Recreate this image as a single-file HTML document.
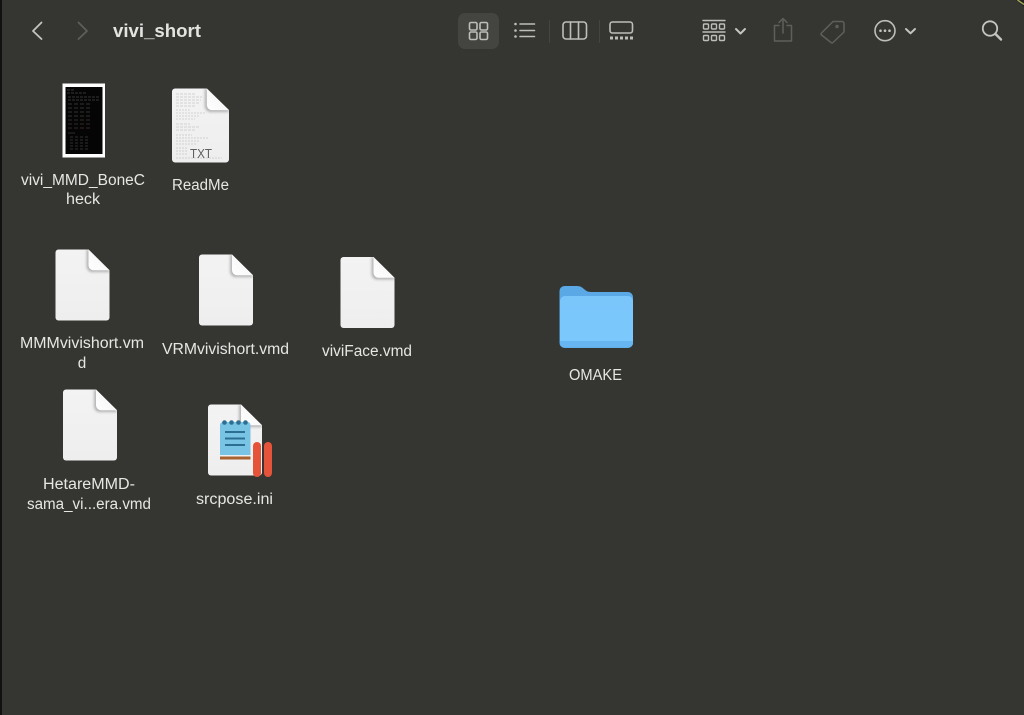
<!DOCTYPE html>
<html lang="en">
<head>
<meta charset="utf-8">
<title>vivi_short</title>
<style>
html,body{margin:0;padding:0;background:#353532;width:1024px;height:715px;overflow:hidden}
svg{display:block;filter:blur(.35px)}
text{font-family:"Liberation Sans",sans-serif}
.l{font-size:15.3px;fill:#e6e6e3;text-anchor:middle}
.t{fill:none;stroke:#bdbdb9;stroke-width:1.6;stroke-linecap:round;stroke-linejoin:round}
.d{fill:none;stroke:#5e5e5a;stroke-width:1.5;stroke-linecap:round;stroke-linejoin:round}
</style>
</head>
<body>
<svg width="1024" height="715" viewBox="0 0 1024 715" xmlns="http://www.w3.org/2000/svg">
<defs>
<linearGradient id="pg" x1="0" y1="0" x2="0" y2="1"><stop offset="0" stop-color="#f3f3f3"/><stop offset="1" stop-color="#eeeeee"/></linearGradient>
<linearGradient id="fg" x1="0" y1="1" x2="1" y2="0"><stop offset="0" stop-color="#ffffff"/><stop offset="1" stop-color="#f2f2f2"/></linearGradient>
<linearGradient id="blue" x1="0" y1="0" x2="0" y2="1"><stop offset="0" stop-color="#7ac6fb"/><stop offset="1" stop-color="#7ac8fd"/></linearGradient>
<filter id="sh" x="-50%" y="-50%" width="200%" height="200%"><feGaussianBlur stdDeviation="1.300"/></filter>
<clipPath id="pc"><path d="M3 0H33L54 21V69a3 3 0 0 1-3 3H3a3 3 0 0 1-3-3V3a3 3 0 0 1 3-3Z"/></clipPath>
<symbol id="doc" viewBox="0 0 54 72" preserveAspectRatio="none" overflow="visible">
<path d="M3 0H33L54 21V69a3 3 0 0 1-3 3H3a3 3 0 0 1-3-3V3a3 3 0 0 1 3-3Z" fill="url(#pg)"/>
<g clip-path="url(#pc)"><path d="M33 0L54 21V23H37a6 6 0 0 1-6-6V0Z" fill="#8c8c8c" opacity=".6" filter="url(#sh)"/></g>
<path d="M33 0L54 21H38a5 5 0 0 1-5-5Z" fill="url(#fg)"/>
</symbol>
</defs>

<rect width="1024" height="715" fill="#353532"/>
<rect x="0" y="0" width="2" height="715" fill="#111110"/>
<path d="M1016 0L1024 0L1024 7Z" fill="#23231f"/>
<path d="M1017.500 0L1024 4.500" stroke="#a3a45a" stroke-width="1.500"/>

<!-- navigation -->
<path d="M41.500 22.500L33 31L41.500 39" fill="none" stroke="#c4c4c0" stroke-width="1.800" stroke-linecap="round" stroke-linejoin="round"/>
<path d="M78.500 22.500L87 31L78.500 39" fill="none" stroke="#5e5e5a" stroke-width="1.800" stroke-linecap="round" stroke-linejoin="round"/>
<text x="113" y="37" font-size="18.500" font-weight="700" fill="#e3e3e0" textLength="88" lengthAdjust="spacingAndGlyphs">vivi_short</text>

<!-- view switcher -->
<rect x="458" y="13" width="41" height="36" rx="7" fill="#444441"/>
<g class="t">
<rect x="469.500" y="22.500" width="7.500" height="7.500" rx="1.500"/><rect x="480" y="22.500" width="7.500" height="7.500" rx="1.500"/>
<rect x="469.500" y="32" width="7.500" height="7.500" rx="1.500"/><rect x="480" y="32" width="7.500" height="7.500" rx="1.500"/>
<path d="M520 24H534.500M520 30.500H534.500M520 36.500H534.500"/>
<rect x="563" y="22" width="23.500" height="17" rx="3"/><path d="M570.500 22V39M578.500 22V39"/>
<rect x="610" y="22" width="22.500" height="11" rx="2.500"/>
</g>
<g fill="#bdbdb9">
<circle cx="515.500" cy="24" r="1.300"/><circle cx="515.500" cy="30.500" r="1.300"/><circle cx="515.500" cy="36.500" r="1.300"/>
<rect x="610" y="36.500" width="3" height="3"/><rect x="615" y="36.500" width="3" height="3"/><rect x="620" y="36.500" width="3" height="3"/><rect x="625" y="36.500" width="3" height="3"/><rect x="630" y="36.500" width="3" height="3"/>
</g>
<path d="M549.500 20V43M599.500 20V43" stroke="#444441" stroke-width="1"/>

<!-- group by -->
<g class="t" style="stroke-width:1.400">
<path d="M703 20.500H725"/><path d="M703 32H725"/>
<rect x="703.500" y="24" width="5" height="5" rx="1"/><rect x="711.500" y="24" width="5" height="5" rx="1"/><rect x="719.500" y="24" width="5" height="5" rx="1"/>
<rect x="703.500" y="35.500" width="5" height="5" rx="1"/><rect x="711.500" y="35.500" width="5" height="5" rx="1"/><rect x="719.500" y="35.500" width="5" height="5" rx="1"/>
</g>
<path d="M736 29L740.500 33.500L745 29" fill="none" stroke="#c4c4c0" stroke-width="2" stroke-linecap="round" stroke-linejoin="round"/>

<!-- share, tag -->
<g class="d">
<path d="M779 25.500H774.500V41H791.500V25.500H787"/>
<path d="M783 33V19M779 22.500L783 18.500L787 22.500"/>
<path d="M821.500 33L833 21.500H842a2 2 0 0 1 2 2V32L833 42.500a1.500 1.500 0 0 1-2 0L821.500 35a1.500 1.500 0 0 1 0-2Z"/>
<circle cx="837" cy="26.500" r="1"/>
</g>

<!-- more -->
<circle cx="885" cy="30.700" r="10" class="t"/>
<g fill="#c4c4c0"><circle cx="880.500" cy="30.700" r="1.300"/><circle cx="885" cy="30.700" r="1.300"/><circle cx="889.500" cy="30.700" r="1.300"/></g>
<path d="M906 29L910.500 33.300L915 29" fill="none" stroke="#c4c4c0" stroke-width="2" stroke-linecap="round" stroke-linejoin="round"/>

<!-- search -->
<circle cx="990" cy="28.500" r="7.200" fill="none" stroke="#c4c4c0" stroke-width="1.800"/>
<path d="M995.500 34L1001 39.500" stroke="#c4c4c0" stroke-width="2.400" stroke-linecap="round"/>

<!-- thumbnail -->
<rect x="62.500" y="83.500" width="42.500" height="74" fill="#fff"/>
<rect x="65.500" y="87" width="37" height="67" fill="#050505"/>
<g stroke-width=".8" opacity=".6">
<path d="M67 90H74M67 93H86M68 97H100M68 100H100" stroke="#707070" stroke-dasharray="3 1"/>
<path d="M68 104H90M68 108H90M68 112H90M68 116H90" stroke="#6d6a62" stroke-dasharray="4 2"/>
<path d="M68 120H90M68 124H90" stroke="#6e5a52" stroke-dasharray="4 2"/>
<path d="M68 128H90" stroke="#715048" stroke-dasharray="4 2"/>
<path d="M68 133H75" stroke="#555"/>
<path d="M70 137H88M70 140H88M70 143H88M70 146H88M70 149H88" stroke="#666" stroke-dasharray="3 2"/>
</g>

<!-- ReadMe -->
<use href="#doc" x="172" y="88.500" width="57" height="74"/>
<g stroke="#a6a6a6" stroke-width=".8" opacity=".55">
<path d="M176 94H196M176 97H202M176 100H201M176 103H199M176 106H196" stroke-dasharray="3 1"/>
<path d="M176 110H190M176 113H205M176 116H200M176 119H195" stroke-dasharray="2 1"/>
<path d="M176 124H190M176 127H200M176 130H196" stroke-dasharray="3 1"/>
<path d="M176 135H192M176 138H208M176 141H200M176 144H196" stroke-dasharray="2 1"/>
<path d="M176 148H188M176 151H188M176 154H188M176 158H222" stroke-dasharray="2 1"/>
</g>
<text x="201" y="158" font-size="13" fill="#5f5f5f" text-anchor="middle" textLength="22" lengthAdjust="spacingAndGlyphs">TXT</text>

<!-- vmd docs -->
<use href="#doc" x="55.500" y="249.500" width="54" height="71"/>
<use href="#doc" x="199" y="254.500" width="54" height="71"/>
<use href="#doc" x="340.500" y="257" width="54" height="71"/>
<use href="#doc" x="63" y="389.500" width="54" height="71"/>

<!-- srcpose -->
<use href="#doc" x="208" y="404.500" width="54" height="71"/>
<path d="M220 425a3 3 0 0 1 3-3H247.500a3 3 0 0 1 3 3V455H220Z" fill="#79c3e4"/>
<rect x="220" y="456.500" width="30.500" height="3" fill="#a9622f"/>
<path d="M225 432H245M225 438.500H245M225 445H245" stroke="#2c6f92" stroke-width="2"/>
<g fill="#2c6f92"><circle cx="224.500" cy="422.500" r="2.300"/><circle cx="231.500" cy="422.500" r="2.300"/><circle cx="238.500" cy="422.500" r="2.300"/><circle cx="245.500" cy="422.500" r="2.300"/></g>
<rect x="253" y="442" width="8" height="35" rx="4" fill="#e5533b"/>
<rect x="264" y="442" width="8" height="35" rx="4" fill="#e5533b"/>

<!-- folder -->
<path d="M559.500 291a5 5 0 0 1 5-5H577C584 286 584 292 591 292H628a5 5 0 0 1 5 5V343a5 5 0 0 1-5 5H564.500a5 5 0 0 1-5-5Z" fill="#5aa9e6"/>
<rect x="560" y="296" width="73" height="51.500" rx="5" fill="url(#blue)"/>
<path d="M560 342.500a5 5 0 0 0 5 5H628a5 5 0 0 0 5-5V341H560Z" fill="#68b6f1"/>

<!-- labels -->
<text class="l" x="83" y="185" textLength="124" lengthAdjust="spacingAndGlyphs">vivi_MMD_BoneC</text>
<text class="l" x="83" y="204" textLength="34" lengthAdjust="spacingAndGlyphs">heck</text>
<text class="l" x="200.500" y="190" textLength="57" lengthAdjust="spacingAndGlyphs">ReadMe</text>
<text class="l" x="82" y="348" textLength="124" lengthAdjust="spacingAndGlyphs">MMMvivishort.vm</text>
<text class="l" x="82" y="368">d</text>
<text class="l" x="225.500" y="354" textLength="127" lengthAdjust="spacingAndGlyphs">VRMvivishort.vmd</text>
<text class="l" x="367" y="356" textLength="90" lengthAdjust="spacingAndGlyphs">viviFace.vmd</text>
<text class="l" x="595.500" y="380" textLength="53" lengthAdjust="spacingAndGlyphs">OMAKE</text>
<text class="l" x="89" y="489" textLength="92" lengthAdjust="spacingAndGlyphs">HetareMMD-</text>
<text class="l" x="89" y="509" textLength="124" lengthAdjust="spacingAndGlyphs">sama_vi...era.vmd</text>
<text class="l" x="234.500" y="504" textLength="77" lengthAdjust="spacingAndGlyphs">srcpose.ini</text>
</svg>
</body>
</html>
